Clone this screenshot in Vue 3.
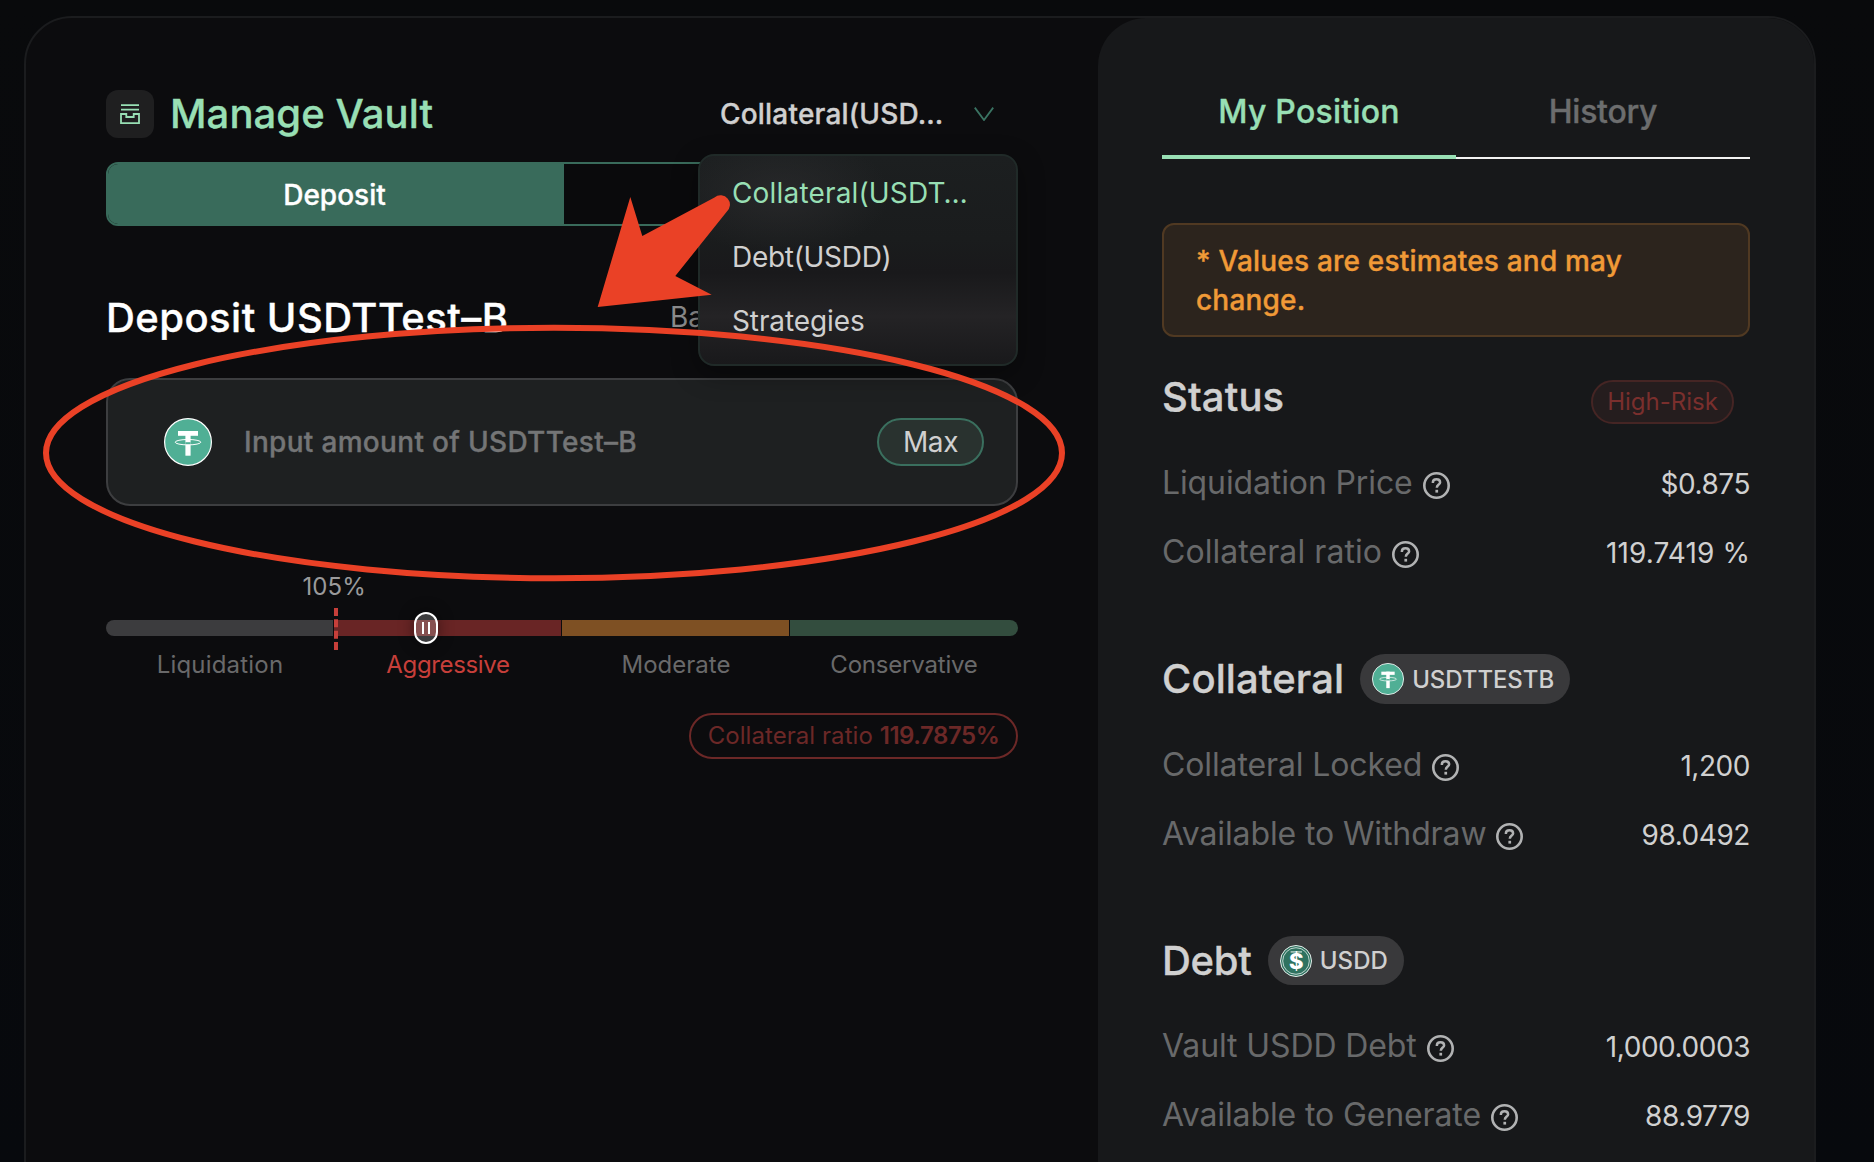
<script setup>
import { h } from 'vue'

const options = [
  { label: 'Collateral(USDT…', active: true, cls: 'wide' },
  { label: 'Debt(USDD)', cls: 'tight' },
  { label: 'Strategies' },
]

const zones = [
  { name: 'Liquidation', cls: 'liquidation' },
  { name: 'Aggressive', cls: 'aggressive', active: true },
  { name: 'Moderate', cls: 'moderate' },
  { name: 'Conservative', cls: 'conservative' },
]

const handlePosition = 33.77

const sections = [
  {
    title: 'Status',
    risk: 'High-Risk',
    rows: [
      { label: 'Liquidation Price', value: '$0.875' },
      { label: 'Collateral ratio', value: '119.7419 %', ratio: true },
    ],
  },
  {
    title: 'Collateral',
    token: 'USDTTESTB',
    coin: 'usdt',
    rows: [
      { label: 'Collateral Locked', value: '1,200' },
      { label: 'Available to Withdraw', value: '98.0492' },
    ],
  },
  {
    title: 'Debt',
    token: 'USDD',
    coin: 'usdd',
    rows: [
      { label: 'Vault USDD Debt', value: '1,000.0003' },
      { label: 'Available to Generate', value: '88.9779' },
    ],
  },
]

const UsdtCoin = () =>
  h('svg', { viewBox: '0 0 48 48' }, [
    h('circle', { cx: 24, cy: 24, r: 23.4, fill: '#50af95', stroke: '#fff', 'stroke-width': 1.2 }),
    h('rect', { x: 14, y: 13, width: 20, height: 4.8, fill: '#fff' }),
    h('rect', { x: 21.4, y: 13, width: 5.2, height: 24.7, fill: '#fff' }),
    h('ellipse', { cx: 24, cy: 24.2, rx: 12.8, ry: 2.7, fill: 'none', stroke: '#fff', 'stroke-width': 1 }),
    h('rect', { x: 21.4, y: 24.2, width: 5.2, height: 2, fill: '#50af95' }),
  ])
</script>

<template>
  <div class="page">
    <main class="panel">
      <section class="manage">
        <header class="head">
          <div class="brand">
            <span class="brand-icon">
              <svg viewBox="0 0 48 48" fill="none" stroke="#98dfb4" stroke-width="1.8">
                <path d="M15 15.2H33M15 19.6H33M15 24H20.3V27H27.7V24H33V33.2H15Z" />
              </svg>
            </span>
            <h1>Manage Vault</h1>
          </div>
          <div class="select">
            <span class="select-value">Collateral(USD…</span>
            <svg class="chevron" viewBox="0 0 20 14" fill="none" stroke="#3a7362" stroke-width="1.8">
              <path d="M0.8 0.6L10 13L19.2 0.6" />
            </svg>
            <ul class="menu">
              <li v-for="o in options" :key="o.label" :class="[o.cls, { active: o.active }]">{{ o.label }}</li>
            </ul>
          </div>
        </header>

        <div class="tabs">
          <button class="tab on">Deposit</button>
          <button class="tab"></button>
        </div>

        <div class="amount-head">
          <h2>Deposit USDTTest–B</h2>
          <span class="balance">Ba</span>
        </div>

        <div class="amount">
          <UsdtCoin class="coin-lg" />
          <span class="placeholder">Input amount of USDTTest–B</span>
          <button class="max">Max</button>
        </div>

        <div class="scale-label">105%</div>
        <div class="scale">
          <i v-for="z in zones" :key="z.name" :class="['zone', z.cls]"></i>
          <svg class="marker" viewBox="0 0 4 42">
            <path d="M2 0V42" stroke="#c73f3a" stroke-width="4" stroke-dasharray="8 3.33" />
          </svg>
          <span class="handle" :style="{ left: handlePosition + '%' }"><b></b><b></b></span>
        </div>
        <div class="zone-names">
          <span v-for="z in zones" :key="z.name" :class="{ active: z.active }">{{ z.name }}</span>
        </div>

        <div class="ratio-pill">Collateral ratio&nbsp;<strong>119.7875%</strong></div>
      </section>

      <aside class="position">
        <nav class="side-tabs">
          <span class="side-tab on">My Position</span>
          <span class="side-tab">History</span>
        </nav>
        <p class="note">* Values are estimates and may change.</p>

        <section v-for="s in sections" :key="s.title" :class="['group', s.coin]">
          <div class="group-head">
            <h3>{{ s.title }}</h3>
            <span v-if="s.risk" class="risk">{{ s.risk }}</span>
            <span v-if="s.token" class="token">
              <UsdtCoin v-if="s.coin === 'usdt'" class="coin-sm" />
              <svg v-else class="coin-sm" viewBox="0 0 32 32">
                <circle cx="16" cy="16" r="15.5" fill="#2f7260" stroke="#e6efec" stroke-width="1" />
                <circle cx="16" cy="16" r="13.3" fill="#2f7260" stroke="#e6efec" stroke-width="0.8" />
                <rect x="10.6" y="6.2" width="11.4" height="1.4" fill="#b9d3ca" />
                <text x="16.2" y="24.3" text-anchor="middle" class="dollar">$</text>
              </svg>
              {{ s.token }}
            </span>
          </div>
          <div v-for="r in s.rows" :key="r.label" class="row">
            <span :class="['label', { ratio: r.ratio }]">
              {{ r.label }}
              <svg class="help" viewBox="0 0 27 27" fill="none" stroke="#b1b2b3">
                <circle cx="13.5" cy="13.5" r="12.2" stroke-width="2.6" />
                <path d="M9.9 10.9V10.2C9.9 8.4 11.4 7.2 13.5 7.2C15.6 7.2 17.1 8.5 17.1 10.4C17.1 12.6 13.8 12.7 13.8 15.8" stroke-width="2.5" />
                <path d="M12.4 19.2H15.1" stroke-width="2.8" />
              </svg>
            </span>
            <span :class="['value', { ratio: r.ratio }]">{{ r.value }}</span>
          </div>
        </section>
      </aside>
    </main>

    <svg class="annotation" viewBox="0 0 1874 1162" fill="none">
      <ellipse cx="554" cy="453" rx="508" ry="125.2" stroke="#ea4126" stroke-width="6" />
      <path
        fill="#ea4126"
        d="M597.7 307L630.3 197L642.3 236L714.5 197.4A9.4 9.4 0 0 1 726.5 212L675.3 276L711.7 294.7Z"
      />
    </svg>
  </div>
</template>

<style>
body {
  background: #080a0d;
}
</style>

<style scoped>
* {
  box-sizing: border-box;
}
.page {
  position: relative;
  width: 1874px;
  height: 1162px;
  overflow: hidden;
  padding: 16px 0 0 24px;
  background: linear-gradient(180deg, #090a0c, #07090d);
  font-family: Inter, "Liberation Sans", sans-serif;
  font-size: 28px;
  font-weight: 400;
  color: #d0d0d0;
}
h1,
h2,
h3,
p,
ul {
  margin: 0;
  padding: 0;
}
h1,
h2,
h3,
.note,
.select-value,
.tab,
.placeholder,
.side-tab {
  font-weight: 500;
  -webkit-text-stroke: 0.35px currentColor;
}
button {
  font: inherit;
  color: inherit;
  border: 0;
  padding: 0;
  background: none;
}
svg {
  display: block;
}
.panel {
  display: flex;
  width: 1792px;
  height: 1200px;
  border: 2px solid #1b1c1e;
  border-radius: 48px;
  background: #0c0c0e;
}

/* Vault management */
.manage {
  display: flex;
  flex-direction: column;
  width: 1072px;
  padding: 72px 80px 0;
}
.head {
  display: flex;
  justify-content: space-between;
  height: 48px;
}
.brand {
  display: flex;
  align-items: center;
  gap: 16px;
}
.brand-icon {
  width: 48px;
  height: 48px;
  border-radius: 12px;
  background: #1f1f20;
}
h1 {
  font-size: 40px;
  line-height: 48px;
  letter-spacing: 0.08px;
  color: #98dfb4;
}
.select {
  position: relative;
  display: flex;
  justify-content: space-between;
  align-items: center;
  width: 320px;
  padding: 0 24px 0 22px;
}
.select-value {
  line-height: 46px;
  padding-bottom: 1px;
  letter-spacing: 0.2px;
}
.chevron {
  width: 20px;
  height: 14px;
}
.menu {
  position: absolute;
  z-index: 2;
  top: 64px;
  left: 0;
  width: 320px;
  height: 212px;
  padding: 5px 0 0 32px;
  list-style: none;
  border: 2px solid #202a28;
  border-radius: 16px;
  background:
    radial-gradient(ellipse 110px 60px at 80px 38px, rgba(44, 44, 46, 0.7), rgba(44, 44, 46, 0)),
    linear-gradient(180deg, #1c1f20 0%, #1a1c1d 40%, #19191b 56%, #242325 77%, #19191b 100%);
  box-shadow: 0 8px 26px rgba(0, 0, 0, 0.35);
}
.menu li {
  line-height: 64px;
  white-space: nowrap;
  letter-spacing: -0.1px;
}
.menu .active {
  color: #98dfb4;
}
.menu .wide {
  letter-spacing: 0.17px;
}
.menu .tight {
  letter-spacing: -0.3px;
}
.tabs {
  display: flex;
  height: 64px;
  margin-top: 24px;
  border: 2px solid #396b5b;
  border-radius: 12px;
  overflow: hidden;
  background: #0a0a0c;
}
.tab {
  width: 456px;
}
.tab.on {
  flex: none;
  padding: 1px 3px 0 0;
  background: #396b5b;
  color: #fff;
  font-weight: 500;
}
.amount-head {
  display: flex;
  height: 48px;
  margin-top: 68px;
}
h2 {
  width: 564px;
  font-size: 40px;
  line-height: 48px;
  letter-spacing: 0.46px;
  color: #fff;
}
.balance {
  line-height: 47px;
  color: #8c8c8d;
}
.amount {
  display: flex;
  align-items: center;
  height: 128px;
  margin-top: 36px;
  padding: 0 32px 0 56px;
  border: 2px solid #3d3e40;
  border-radius: 24px;
  background: #1e2021;
}
.coin-lg {
  width: 48px;
  height: 48px;
}
.placeholder {
  flex: 1;
  margin-left: 32px;
  letter-spacing: 0.31px;
  color: #747576;
}
.max {
  width: 107px;
  height: 48px;
  padding-bottom: 1px;
  border: 2px solid #3a6f5e;
  border-radius: 24px;
  background: #29322f;
  letter-spacing: -0.4px;
}
.scale-label {
  margin: 66px 0 0 196.5px;
  font-size: 24px;
  line-height: 30px;
  letter-spacing: 0.1px;
  color: #9a9a9b;
}
.scale {
  position: relative;
  display: flex;
  gap: 1px;
  height: 16px;
  margin-top: 18px;
}
.zone {
  width: 227px;
}
.liquidation {
  background: #3c3c3e;
  border-radius: 8px 0 0 8px;
}
.aggressive {
  background: #692525;
}
.moderate {
  background: #7e5023;
}
.conservative {
  flex: 1;
  background: #334d3e;
  border-radius: 0 8px 8px 0;
}
.marker {
  position: absolute;
  left: 228px;
  top: -12px;
  width: 4px;
  height: 42px;
}
.handle {
  position: absolute;
  top: -8px;
  display: flex;
  justify-content: center;
  align-items: center;
  gap: 4px;
  width: 24px;
  height: 32px;
  border: 2px solid #fff;
  border-radius: 12px;
  background: rgba(255, 255, 255, 0.2);
  box-shadow: 0 0 16px rgba(0, 0, 0, 0.45);
}
.handle b {
  width: 2px;
  height: 12px;
  background: #fff;
}
.zone-names {
  display: flex;
  margin-top: 14px;
  font-size: 24px;
  line-height: 30px;
  text-align: center;
  color: #69696a;
}
.zone-names span {
  flex: 1 0 0;
}
.zone-names span:first-child {
  letter-spacing: 0.2px;
}
.zone-names span:last-child {
  letter-spacing: -0.2px;
}
.zone-names .active {
  letter-spacing: -0.35px;
  color: #c73f3a;
}
.ratio-pill {
  display: flex;
  justify-content: center;
  align-self: flex-end;
  width: 329px;
  height: 46px;
  margin-top: 33px;
  border: 2px solid #6c2827;
  border-radius: 23px;
  font-size: 24px;
  line-height: 42px;
  letter-spacing: 0.06px;
  color: #6c2827;
}
.ratio-pill strong {
  font-weight: 600;
  letter-spacing: -0.46px;
}

/* Position summary */
.position {
  width: 716px;
  padding: 74px 64px 0;
  border-radius: 48px 46px 46px 0;
  background: #17181a;
}
.side-tabs {
  display: flex;
}
.side-tab {
  width: 294px;
  padding-bottom: 25px;
  border-bottom: 2px solid #f2f2f2;
  font-size: 32px;
  line-height: 40px;
  letter-spacing: -0.27px;
  text-align: center;
  color: #6c6d6e;
}
.side-tab.on {
  padding-bottom: 23px;
  border-bottom: 4px solid #98dfb4;
  letter-spacing: 0.25px;
  color: #98dfb4;
}
.note {
  margin-top: 64px;
  padding: 17px 32px 15px;
  border: 2px solid #503922;
  border-radius: 12px;
  background: #2c241d;
  color: #f09a37;
  line-height: 39px;
  letter-spacing: 0.19px;
}
.group-head {
  display: flex;
  align-items: center;
  gap: 16px;
  height: 49px;
  margin: 68px 0 26px;
}
.note + .group .group-head {
  justify-content: space-between;
  align-items: flex-start;
  height: 48px;
  margin: 36px 0 27px;
}
.usdt .group-head {
  height: 50px;
}
h3 {
  font-size: 40px;
  line-height: 48px;
  letter-spacing: 0.1px;
}
.usdd h3 {
  letter-spacing: -0.25px;
}
.risk {
  width: 143px;
  height: 44px;
  margin: 7px 16px 0 0;
  border: 2px solid #452524;
  border-radius: 22px;
  background: #251d1e;
  color: #7a2f2d;
  font-size: 24px;
  line-height: 40px;
  text-align: center;
}
.token {
  display: flex;
  align-items: center;
  gap: 8px;
  height: 100%;
  padding: 0 16px 0 12px;
  border-radius: 25px;
  background: #39393b;
  font-size: 24px;
  font-weight: 500;
  letter-spacing: -0.08px;
}
.usdd .token {
  letter-spacing: 0.1px;
}
.coin-sm {
  width: 32px;
  height: 32px;
}
.dollar {
  font: 800 22px Inter, "Liberation Sans", sans-serif;
  fill: #fff;
}
.row {
  display: flex;
  justify-content: space-between;
  align-items: baseline;
  height: 69px;
}
.label {
  display: flex;
  align-items: center;
  gap: 10px;
  font-size: 32px;
  line-height: 69px;
  letter-spacing: -0.12px;
  color: #68696a;
}
.label.ratio {
  letter-spacing: 0.06px;
}
.help {
  width: 27px;
  height: 27px;
  margin-top: 6px;
}
.value {
  line-height: 40px;
  letter-spacing: -0.45px;
}
.value.ratio {
  letter-spacing: 0.1px;
}
.annotation {
  position: absolute;
  z-index: 3;
  top: 0;
  left: 0;
  width: 1874px;
  height: 1162px;
}
</style>
